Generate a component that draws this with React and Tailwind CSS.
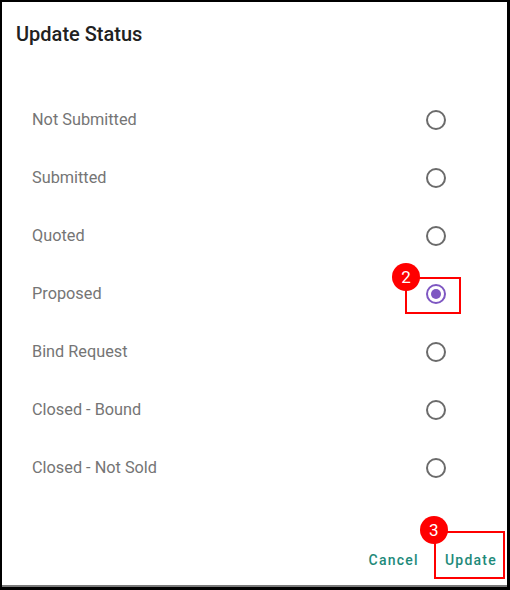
import React, { useState } from 'react';

const STATUSES = [
  'Not Submitted',
  'Submitted',
  'Quoted',
  'Proposed',
  'Bind Request',
  'Closed - Bound',
  'Closed - Not Sold',
];

function Badge({ n, className }) {
  return (
    <span
      className={
        'absolute w-[28px] h-[28px] rounded-full bg-[#ff0000] text-white text-[17px] leading-none flex items-center justify-center z-10 ' +
        className
      }
    >
      {n}
    </span>
  );
}

function Radio({ checked, onChange }) {
  return (
    <button
      onClick={onChange}
      className={
        'w-[20px] h-[20px] rounded-full border-2 flex items-center justify-center ' +
        (checked ? 'border-[#7e57c2]' : 'border-[#6b6b6b]')
      }
    >
      {checked && <span className="w-[10px] h-[10px] rounded-full bg-[#7e57c2]" />}
    </button>
  );
}

export default function App() {
  const [selected, setSelected] = useState('Proposed');

  return (
    <div
      className="w-[510px] h-[590px] bg-white border-black border-l-2 border-t-2 border-r-[3px] border-b-[3px] overflow-hidden"
      style={{ fontFamily: 'Roboto, "Noto Sans", sans-serif' }}
    >
      <div className="h-full border-b-2 border-[#7a7a7a]">
        <h2 className="px-[14px] pt-[18px] text-[20px] leading-7 font-medium text-[#212121]">Update Status</h2>

        <ul className="mt-[43px]">
          {STATUSES.map((s) => (
            <li key={s} className="h-[58px] flex items-center justify-between pl-[30px] pr-[61px]">
              <span className="text-[16.3px] text-[#757575]">{s}</span>
              <div className="relative">
                <Radio checked={selected === s} onChange={() => setSelected(s)} />
                {s === 'Proposed' && (
                  <>
                    <span className="absolute left-[-21px] top-[-7px] w-[56px] h-[37px] border-2 border-[#ff0000]" />
                    <Badge n={2} className="left-[-34px] top-[-21px]" />
                  </>
                )}
              </div>
            </li>
          ))}
        </ul>

        <div className="mt-[45px] flex justify-end gap-[10px] pr-[2px]">
          <button className="h-9 px-2 text-[14px] font-medium tracking-[1.25px] text-[#1e8a7a]">Cancel</button>
          <div className="relative">
            <button className="h-9 px-2 text-[14px] font-medium tracking-[1.25px] text-[#1e8a7a]">Update</button>
            <span className="absolute left-[-3px] top-[-11px] w-[71px] h-[48px] border-2 border-[#ff0000]" />
            <Badge n={3} className="left-[-17px] top-[-26px]" />
          </div>
        </div>
      </div>
    </div>
  );
}
